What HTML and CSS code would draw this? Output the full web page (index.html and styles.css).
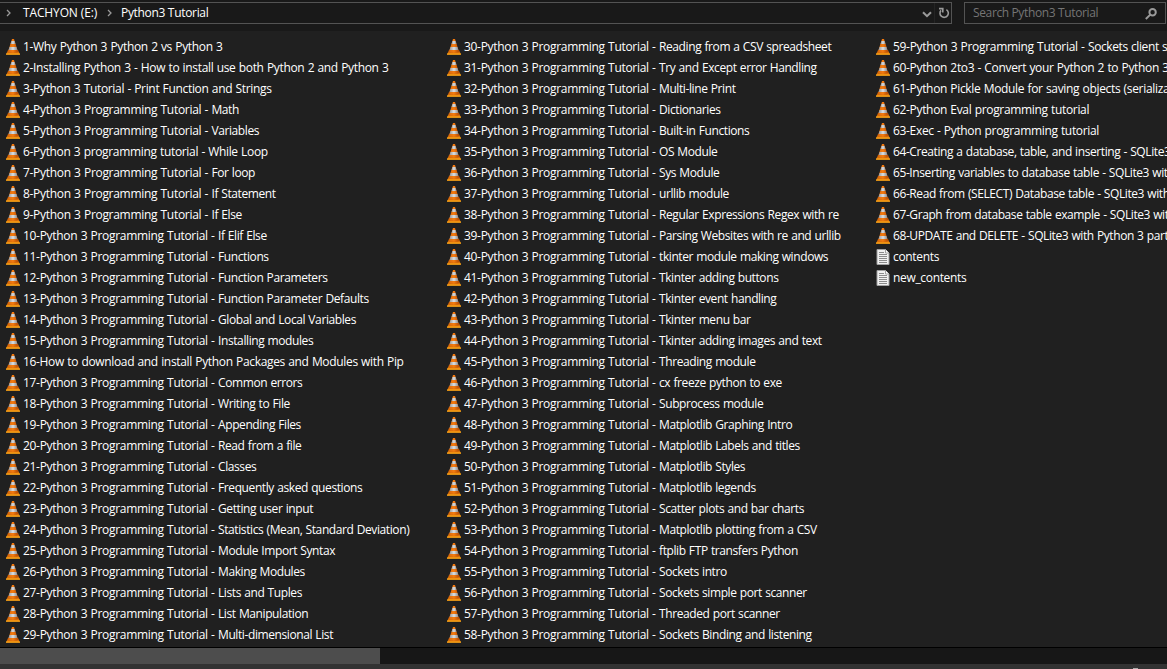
FILE: index.html
```html
<!DOCTYPE html>
<html lang="en">
<head>
<meta charset="utf-8">
<title>Python3 Tutorial</title>
<link rel="stylesheet" href="styles.css">
</head>
<body>
<svg class="sprite" aria-hidden="true">
  <defs>
    <linearGradient id="body" x1="0" x2="1"><stop offset="0" stop-color="#d96a10"/><stop offset=".5" stop-color="#f57c10"/><stop offset="1" stop-color="#b04a08"/></linearGradient>
    <linearGradient id="band" x1="0" x2="1"><stop offset="0" stop-color="#989898"/><stop offset=".5" stop-color="#dcdfe2"/><stop offset="1" stop-color="#8a8a8a"/></linearGradient>
    <linearGradient id="base" x1="0" x2="0" y1="0" y2="1"><stop offset="0" stop-color="#b84e05"/><stop offset="1" stop-color="#ee8509"/></linearGradient>
    <symbol id="cone" viewBox="0 0 14 16">
      <path d="M2 11h10l2 4.600H0z" fill="url(#base)"/>
      <path d="M0 14.500h14v1.200H0z" fill="#ffab19"/>
      <path d="M6 0h2l4 12.500c-1 1.600-9 1.600-10 0z" fill="url(#body)"/>
      <path d="M5.400 2h3.200l.9 3h-5z" fill="url(#band)"/>
      <path d="M3.500 8h7l.9 3h-8.800z" fill="url(#band)"/>
    </symbol>
    <symbol id="doc" viewBox="0 0 14 16">
      <path d="M1 .5h8.5l3.500 3.500v11.500H1z" fill="#f1f1f1" stroke="#a0a0a0"/>
      <path d="M9.500 .5v3.500h3.500" fill="#fff" stroke="#a0a0a0"/>
      <path d="M3 3.5h5M3 5.5h8M3 7.5h8M3 9.5h8M3 11.5h8M3 13.5h8" stroke="#8b8b8b"/>
    </symbol>
  </defs>
</svg>
<div class="window">
  <header class="toolbar">
    <nav class="address">
      <svg class="sep" viewBox="0 0 6 8"><path d="M1 1l3 3-3 3"/></svg>
      <span class="crumb crumb-drive">TACHYON (E:)</span>
      <svg class="sep" viewBox="0 0 6 8"><path d="M1 1l3 3-3 3"/></svg>
      <span class="crumb crumb-folder">Python3 Tutorial</span>
      <svg class="chevron" viewBox="0 0 10 7"><path d="M1 1.2l4 4 4-4"/></svg>
      <span class="refresh"><svg viewBox="0 0 12 12"><path d="M8.400 2.600A4.200 4.200 0 1 1 3 3.400"/><path d="M1 1.600H4.800V5.400"/></svg></span>
    </nav>
    <div class="search">
      <span class="placeholder">Search Python3 Tutorial</span>
      <svg class="lens" viewBox="0 0 12 12"><circle cx="7.6" cy="4.2" r="3.2"/><path d="M5.3 6.6L.8 11"/></svg>
    </div>
  </header>
  <main class="files" id="files"></main>
  <div class="scroll"><div class="thumb"></div></div>
  <footer class="status"><span class="mark"></span></footer>
</div>
<script src="script.js"></script>
</body>
</html>
```
FILE: styles.css
```css
body { margin: 0; background: #202020; }
.sprite { position: absolute; width: 0; height: 0; }
.window {
  width: 1167px; height: 669px; overflow: hidden;
  display: flex; flex-direction: column;
  background: #202020; color: #fff;
  font: 12px/21px "Open Sans", "Noto Sans", sans-serif;
  white-space: pre;
}
.toolbar {
  flex: none; box-sizing: border-box; height: 31px; padding: 2px 1px 7px 0;
  display: flex; gap: 12px; background: #191919;
}
.address {
  width: 952px; box-sizing: border-box; display: flex; align-items: center;
  border: 1px solid #535353; border-left: 0; padding-left: 6px;
}
.address svg, .search svg { fill: none; stroke: #9a9a9a; flex: none; }
.sep { width: 6px; height: 8px; stroke-width: 1.3; }
.crumb { line-height: 20px; letter-spacing: -.32px; }
.crumb-drive { width: 84px; margin-left: 11px; letter-spacing: -.13px; }
.crumb-folder { margin-left: 8px; flex: 1; }
.chevron { width: 10px; height: 7px; margin-right: 2px; margin-top: 2px; stroke-width: 2; }
.refresh { width: 16px; height: 20px; border-left: 1px solid #242424; display: flex; align-items: center; justify-content: center; }
.refresh svg { width: 12px; height: 12px; margin-left: 1px; stroke-width: 1.6; }
.search {
  width: 202px; box-sizing: border-box; border: 1px solid #535353;
  display: flex; align-items: center; justify-content: space-between; padding: 0 8px 0 8px;
}
.placeholder { color: #757575; line-height: 20px; letter-spacing: -.37px; }
.lens { width: 12px; height: 12px; margin-top: 2px; stroke-width: 2; }
.files { flex: none; height: 616px; display: flex; box-sizing: border-box; padding: 5px 0 0 6px; }
.column { flex: none; margin: 0; padding: 0; list-style: none; }
.column:nth-child(1) { width: 441px; }
.column:nth-child(2) { width: 429px; }
.file { display: flex; height: 21px; align-items: center; gap: 3px; }
.name { letter-spacing: -.33px; word-spacing: .5px; }
.database { letter-spacing: -.41px; }
.series { letter-spacing: -.3px; }
.topic { letter-spacing: -.4px; }
.icon { width: 14px; height: 16px; flex: none; }
.scroll { flex: none; height: 17px; box-sizing: border-box; border-top: 1px solid #000; background: #171717; }
.thumb { width: 380px; height: 16px; background: #4d4d4d; }
.status { flex: 1; background: #333; display: flex; align-items: flex-end; }
.mark { width: 5px; height: 1px; margin-left: 1133px; background: #aaa; }
```
FILE: script.js
```javascript
const P = "Python 3 Programming Tutorial - ";
const columns = [
  ["Why Python 3 Python 2 vs Python 3", "Installing Python 3 - How to install use both Python 2 and Python 3",
   "Python 3 Tutorial - Print Function and Strings", P + "Math", P + "Variables",
   "Python 3 programming tutorial - While Loop", P + "For loop", P + "If Statement", P + "If Else",
   P + "If Elif Else", P + "Functions", P + "Function Parameters", P + "Function Parameter Defaults",
   P + "Global and Local Variables", P + "Installing modules",
   "How to download and install Python Packages and Modules with Pip", P + "Common errors",
   P + "Writing to File", P + "Appending Files", P + "Read from a file", P + "Classes",
   P + "Frequently asked questions", P + "Getting user input", P + "Statistics (Mean, Standard Deviation)",
   P + "Module Import Syntax", P + "Making Modules", P + "Lists and Tuples", P + "List Manipulation",
   P + "Multi-dimensional List"],
  [P + "Reading from a CSV spreadsheet", P + "Try and Except error Handling", P + "Multi-line Print",
   P + "Dictionaries", P + "Built-in Functions", P + "OS Module", P + "Sys Module", P + "urllib module",
   P + "Regular Expressions Regex with re", P + "Parsing Websites with re and urllib",
   P + "tkinter module making windows", P + "Tkinter adding buttons", P + "Tkinter event handling",
   P + "Tkinter menu bar", P + "Tkinter adding images and text", P + "Threading module",
   P + "cx freeze python to exe", P + "Subprocess module", P + "Matplotlib Graphing Intro",
   P + "Matplotlib Labels and titles", P + "Matplotlib Styles", P + "Matplotlib legends",
   P + "Scatter plots and bar charts", P + "Matplotlib plotting from a CSV", P + "ftplib FTP transfers Python",
   P + "Sockets intro", P + "Sockets simple port scanner", P + "Threaded port scanner",
   P + "Sockets Binding and listening"],
  [P + "Sockets client s", "Python 2to3 - Convert your Python 2 to Python 3",
   "Python Pickle Module for saving objects (serializa", "Python Eval programming tutorial",
   "Exec - Python programming tutorial", "Creating a database, table, and inserting - SQLite3",
   "Inserting variables to database table - SQLite3 with",
   "Read from (SELECT) Database table - SQLite3 with",
   "Graph from database table example - SQLite3 with",
   "UPDATE and DELETE - SQLite3 with Python 3 part"]
];

const row = (icon, label) =>
  `<li class="file"><svg class="icon"><use href="#${icon}"/></svg><span class="name">${label}</span></li>`;

// Episodes of the main series are set as a series part and a topic part.
const label = (number, name) => {
  if (name.startsWith(P)) {
    return `<span class="series">${number}-${P}</span><span class="topic">${name.slice(P.length)}</span>`;
  }
  return name.includes("SQLite3")
    ? `<span class="database">${number}-${name}</span>`
    : `${number}-${name}`;
};

let n = 0;
const lists = columns.map(names => names.map(name => row("cone", label(++n, name))));
lists[2].push(row("doc", "contents"), row("doc", "new_contents"));
document.getElementById("files").innerHTML =
  lists.map(rows => `<ul class="column">${rows.join("")}</ul>`).join("");
```
